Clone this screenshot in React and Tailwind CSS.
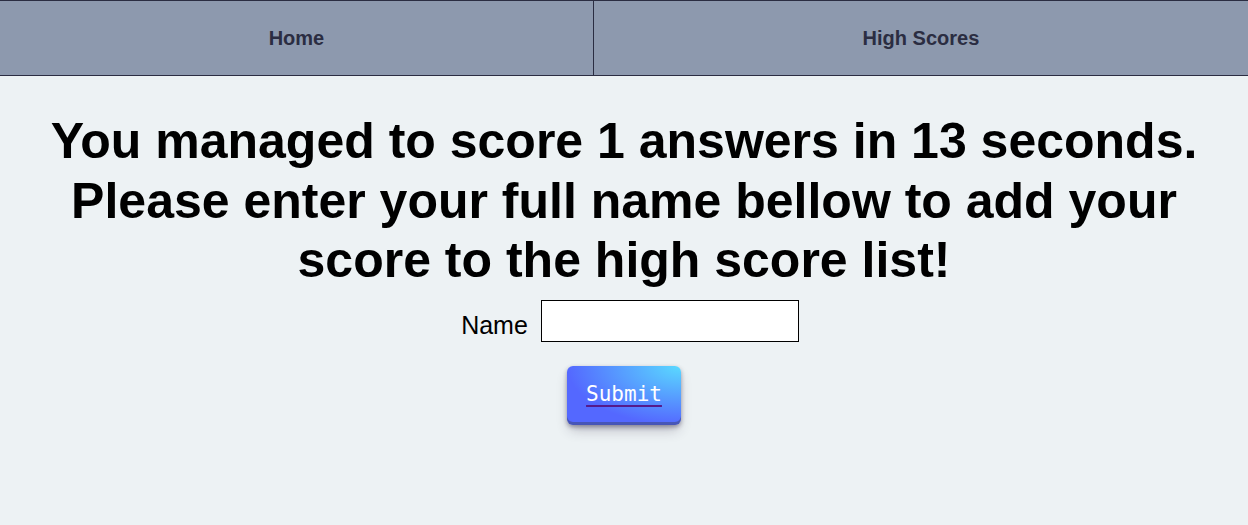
import React, { useState } from 'react';

const NavItem = ({ label, last }) => (
  <a
    href="#"
    className={`flex-auto flex items-center justify-center text-[20px] font-bold text-[#2b2d42] no-underline ${
      last ? '' : 'border-r border-[#2b2d42]'
    }`}
  >
    {label}
  </a>
);

const App = () => {
  const [name, setName] = useState('');

  return (
    <div className="min-h-[525px] bg-[#edf2f4] font-['Liberation_Sans',Arial,sans-serif] text-black">
      {/* Barra de navegación */}
      <nav className="flex h-[76px] bg-[#8d99ae] border-y border-[#2b2d42]">
        <NavItem label="Home" />
        <NavItem label="High Scores" last />
      </nav>

      <div className="flex flex-col items-center pt-[36px] px-10">
        <h1 className="text-center text-[50px] leading-[59.5px] font-bold">
          You managed to score 1 answers in 13 seconds. Please enter your full name bellow to add your
          score to the high score list!
        </h1>

        <form
          className="flex flex-col items-center mt-[9px]"
          onSubmit={(e) => e.preventDefault()}
        >
          <div className="flex items-center gap-[13px] pl-[12px]">
            <label htmlFor="name" className="text-[25px] leading-[29px] mt-[10px]">Name</label>
            <input
              id="name"
              type="text"
              value={name}
              onChange={(e) => setName(e.target.value)}
              className="w-[258px] h-[42px] bg-white border border-black px-2 text-[20px] outline-none"
            />
          </div>

          <button
            type="submit"
            className="mt-[24px] h-[59px] px-[19px] rounded-[6px] text-white text-[21px] font-['DejaVu_Sans_Mono',monospace] bg-[radial-gradient(100%_100%_at_100%_0,#5adaff_0,#5468ff_100%)] shadow-[0_2px_4px_rgba(45,35,66,0.4),0_7px_13px_-3px_rgba(45,35,66,0.3),inset_0_-3px_0_rgba(58,65,111,0.5)]"
          >
            <span className="underline decoration-[#551a8b] decoration-2 underline-offset-4">Submit</span>
          </button>
        </form>
      </div>
    </div>
  );
};

export default App;
